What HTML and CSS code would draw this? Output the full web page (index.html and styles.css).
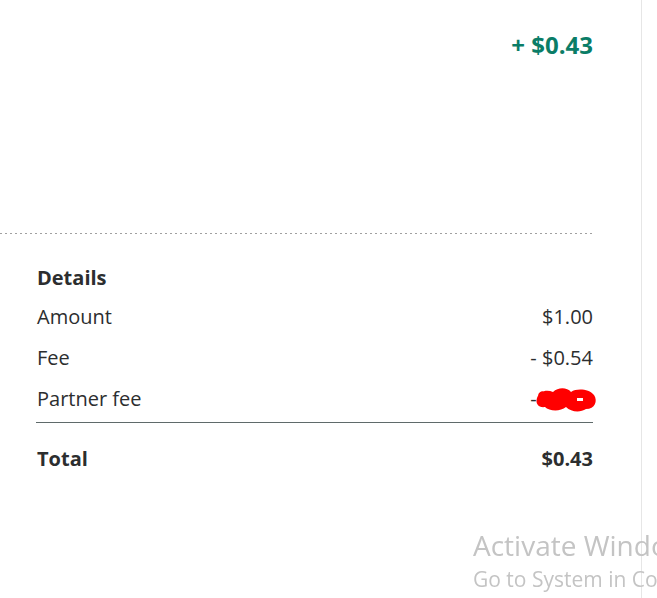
FILE: index.html
```html
<!DOCTYPE html>
<html lang="en">
<head>
  <meta charset="UTF-8" />
  <title>Transaction details</title>
  <link rel="stylesheet" href="styles.css">
</head>
<body>
  <div class="panel">
    <div class="summary">
      <span class="net-amount">+ $0.43</span>
    </div>
    <div class="dotted"></div>
    <div class="details">
      <h3>Details</h3>
      <div class="row"><span>Amount</span><span>$1.00</span></div>
      <div class="row"><span>Fee</span><span>- $0.54</span></div>
      <div class="row"><span>Partner fee</span>
        <span class="hidden-value">- $0.03
          <svg class="scribble" width="64" height="28" viewBox="0 0 64 28">
            <path d="M3 12 C5 5 13 3 19 6 C24 1 33 1 37 6 C43 2 55 3 60 9 C64 15 61 23 52 23 C46 27 37 26 32 21 C26 26 15 25 11 21 C5 22 1 18 3 12 Z" fill="#ff0000"/>
            <path d="M8 9 C13 16 21 19 29 13 C35 9 41 17 50 12" stroke="#ff0000" stroke-width="7" fill="none" stroke-linecap="round"/>
            <rect x="43" y="12" width="6" height="3" fill="#ffffff"/>
          </svg>
        </span>
      </div>
      <div class="row total"><span>Total</span><span>$0.43</span></div>
    </div>
  </div>
  <div class="watermark">
    <div class="wm-title">Activate Windows</div>
    <div class="wm-sub">Go to System in Control Panel to activate Windows.</div>
  </div>
</body>
</html>
```

FILE: styles.css
```css
html, body { height: 100%; }
body {
  margin: 0;
  background: #fff;
  font-family: "Open Sans", Lato, sans-serif;
  color: #2c2e2f;
  overflow: hidden;
}
.panel {
  width: 641px;
  height: 100%;
  border-right: 1px solid #e6e6e6;
}
.summary {
  display: flex;
  justify-content: flex-end;
  padding: 28px 48px 0 37px;
  height: 203px;
  box-sizing: border-box;
}
.net-amount {
  color: #0a7d67;
  font-size: 24px;
  font-weight: bold;
}
.dotted {
  margin: 30px 48px 0 0;
  height: 1px;
  background: repeating-linear-gradient(to right, #a0a0a0 0 2px, transparent 2px 5px);
}
.details {
  padding: 31px 48px 0 36px;
}
.details h3 {
  margin: 0 0 6px 1px;
  font-size: 20px;
  font-weight: bold;
  line-height: 26px;
}
.row {
  display: flex;
  justify-content: space-between;
  font-size: 20px;
  line-height: 26px;
  padding: 7px 0 8px 1px;
}
.row.total {
  border-top: 1px solid #5f6a6a;
  margin-top: 2px;
  padding-top: 23px;
  font-weight: bold;
}
.hidden-value { position: relative; }
.scribble {
  position: absolute;
  right: -5px;
  top: 0;
}
.watermark {
  position: fixed;
  left: 473px;
  top: 527px;
  color: #c4c4c4;
  font-family: "Open Sans", sans-serif;
  white-space: nowrap;
}
.wm-title { font-size: 28px; line-height: 36px; }
.wm-sub { font-size: 21px; line-height: 32px; }
```
